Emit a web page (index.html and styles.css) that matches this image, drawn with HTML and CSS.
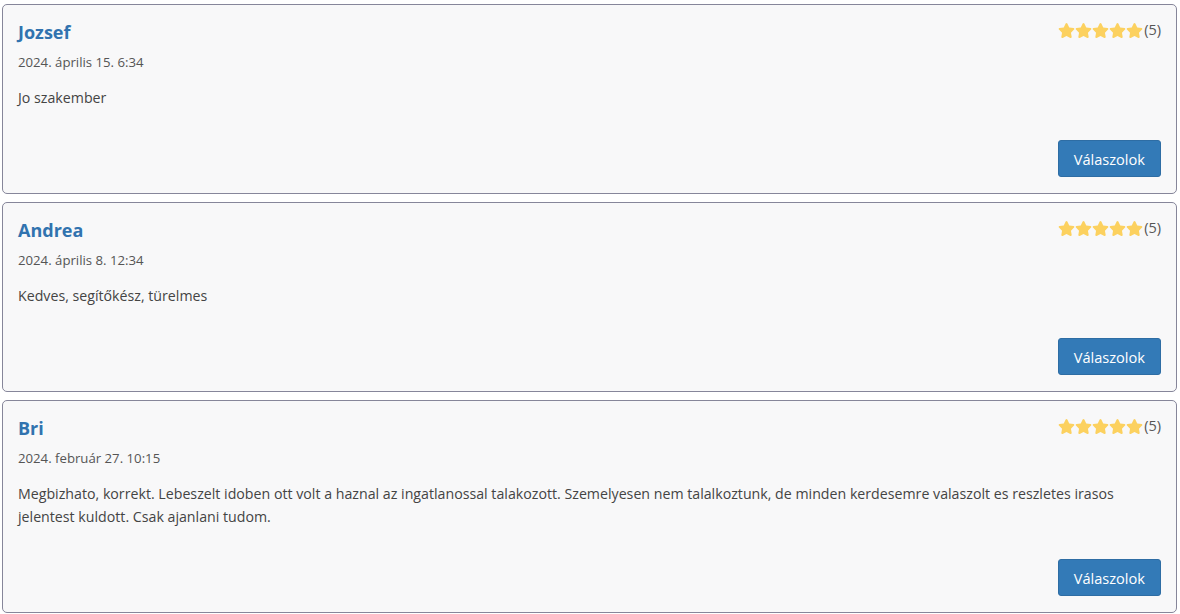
FILE: index.html
```html
<!DOCTYPE html>
<html lang="hu">
<head>
<meta charset="utf-8">
<link rel="stylesheet" href="styles.css">
</head>
<body>
<div class="reviews">
  <div class="review">
    <div class="head">
      <div class="name">Jozsef</div>
      <div class="rating">
        <span class="stars">
          <svg viewBox="0 0 576 512"><path d="M259.3 17.8L194 150.2 47.9 171.5c-26.2 3.8-36.7 36.1-17.7 54.6l105.7 103-25 145.5c-4.5 26.3 23.2 46 46.4 33.7L288 439.6l130.7 68.7c23.2 12.2 50.9-7.4 46.4-33.7l-25-145.5 105.7-103c19-18.5 8.5-50.8-17.7-54.6L382 150.2 316.7 17.8c-11.700-23.6-45.6-23.9-57.4 0z"/></svg><svg viewBox="0 0 576 512"><path d="M259.3 17.8L194 150.2 47.9 171.5c-26.2 3.8-36.7 36.1-17.7 54.6l105.7 103-25 145.5c-4.5 26.3 23.2 46 46.4 33.7L288 439.6l130.7 68.7c23.2 12.2 50.9-7.4 46.4-33.7l-25-145.5 105.7-103c19-18.5 8.5-50.8-17.7-54.6L382 150.2 316.7 17.8c-11.7-23.6-45.6-23.9-57.4 0z"/></svg><svg viewBox="0 0 576 512"><path d="M259.3 17.8L194 150.2 47.9 171.5c-26.2 3.8-36.7 36.1-17.7 54.6l105.7 103-25 145.5c-4.5 26.3 23.2 46 46.4 33.7L288 439.6l130.7 68.7c23.2 12.2 50.9-7.4 46.4-33.7l-25-145.5 105.7-103c19-18.5 8.5-50.8-17.7-54.6L382 150.2 316.7 17.8c-11.7-23.6-45.6-23.9-57.4 0z"/></svg><svg viewBox="0 0 576 512"><path d="M259.3 17.8L194 150.2 47.9 171.5c-26.2 3.8-36.7 36.1-17.7 54.6l105.7 103-25 145.5c-4.5 26.3 23.2 46 46.4 33.7L288 439.6l130.7 68.7c23.2 12.2 50.9-7.4 46.4-33.7l-25-145.5 105.7-103c19-18.5 8.5-50.8-17.7-54.6L382 150.2 316.7 17.8c-11.7-23.6-45.6-23.9-57.4 0z"/></svg><svg viewBox="0 0 576 512"><path d="M259.3 17.8L194 150.2 47.9 171.5c-26.2 3.8-36.7 36.1-17.7 54.6l105.7 103-25 145.5c-4.5 26.3 23.2 46 46.4 33.7L288 439.6l130.7 68.7c23.2 12.2 50.9-7.4 46.4-33.7l-25-145.5 105.7-103c19-18.5 8.5-50.8-17.7-54.6L382 150.2 316.7 17.8c-11.7-23.6-45.6-23.9-57.4 0z"/></svg>
        </span><span class="count">(5)</span>
      </div>
    </div>
    <div class="date">2024. április 15. 6:34</div>
    <p class="text">Jo szakember</p>
    <div class="actions"><button class="btn">Válaszolok</button></div>
  </div>

  <div class="review">
    <div class="head">
      <div class="name">Andrea</div>
      <div class="rating">
        <span class="stars">
          <svg viewBox="0 0 576 512"><path d="M259.3 17.8L194 150.2 47.9 171.5c-26.2 3.8-36.7 36.1-17.7 54.6l105.7 103-25 145.5c-4.5 26.3 23.2 46 46.4 33.7L288 439.6l130.7 68.7c23.2 12.2 50.9-7.4 46.4-33.7l-25-145.5 105.7-103c19-18.5 8.5-50.8-17.7-54.6L382 150.2 316.7 17.8c-11.7-23.6-45.6-23.9-57.4 0z"/></svg><svg viewBox="0 0 576 512"><path d="M259.3 17.8L194 150.2 47.9 171.5c-26.2 3.8-36.7 36.1-17.7 54.6l105.7 103-25 145.5c-4.5 26.3 23.2 46 46.4 33.7L288 439.6l130.7 68.7c23.2 12.2 50.9-7.4 46.4-33.7l-25-145.5 105.7-103c19-18.5 8.5-50.8-17.7-54.6L382 150.2 316.7 17.8c-11.7-23.6-45.6-23.9-57.4 0z"/></svg><svg viewBox="0 0 576 512"><path d="M259.3 17.8L194 150.2 47.9 171.5c-26.2 3.8-36.7 36.1-17.7 54.6l105.7 103-25 145.5c-4.5 26.3 23.2 46 46.4 33.7L288 439.6l130.7 68.7c23.2 12.2 50.9-7.4 46.4-33.7l-25-145.5 105.7-103c19-18.5 8.5-50.8-17.7-54.6L382 150.2 316.7 17.8c-11.7-23.6-45.6-23.9-57.4 0z"/></svg><svg viewBox="0 0 576 512"><path d="M259.3 17.8L194 150.2 47.9 171.5c-26.2 3.8-36.7 36.1-17.7 54.6l105.7 103-25 145.5c-4.5 26.3 23.2 46 46.4 33.7L288 439.6l130.7 68.7c23.2 12.2 50.9-7.4 46.4-33.7l-25-145.5 105.7-103c19-18.5 8.5-50.8-17.7-54.6L382 150.2 316.7 17.8c-11.7-23.6-45.6-23.9-57.4 0z"/></svg><svg viewBox="0 0 576 512"><path d="M259.3 17.8L194 150.2 47.9 171.5c-26.2 3.8-36.7 36.1-17.7 54.6l105.7 103-25 145.5c-4.5 26.3 23.2 46 46.4 33.7L288 439.6l130.7 68.7c23.2 12.2 50.9-7.4 46.4-33.7l-25-145.5 105.7-103c19-18.5 8.5-50.8-17.7-54.6L382 150.2 316.7 17.8c-11.7-23.6-45.6-23.9-57.4 0z"/></svg>
        </span><span class="count">(5)</span>
      </div>
    </div>
    <div class="date">2024. április 8. 12:34</div>
    <p class="text">Kedves, segítőkész, türelmes</p>
    <div class="actions"><button class="btn">Válaszolok</button></div>
  </div>

  <div class="review">
    <div class="head">
      <div class="name">Bri</div>
      <div class="rating">
        <span class="stars">
          <svg viewBox="0 0 576 512"><path d="M259.3 17.8L194 150.2 47.9 171.5c-26.2 3.8-36.7 36.1-17.7 54.6l105.7 103-25 145.5c-4.5 26.3 23.2 46 46.4 33.7L288 439.6l130.7 68.7c23.2 12.2 50.9-7.4 46.4-33.7l-25-145.5 105.7-103c19-18.5 8.5-50.8-17.7-54.6L382 150.2 316.7 17.8c-11.7-23.6-45.6-23.9-57.4 0z"/></svg><svg viewBox="0 0 576 512"><path d="M259.3 17.8L194 150.2 47.9 171.5c-26.2 3.8-36.7 36.1-17.7 54.6l105.7 103-25 145.5c-4.5 26.3 23.2 46 46.4 33.7L288 439.6l130.7 68.7c23.2 12.2 50.9-7.4 46.4-33.7l-25-145.5 105.7-103c19-18.5 8.5-50.8-17.7-54.6L382 150.2 316.7 17.8c-11.7-23.6-45.6-23.9-57.4 0z"/></svg><svg viewBox="0 0 576 512"><path d="M259.3 17.8L194 150.2 47.9 171.5c-26.2 3.8-36.7 36.1-17.7 54.6l105.7 103-25 145.5c-4.5 26.3 23.2 46 46.4 33.7L288 439.6l130.7 68.7c23.2 12.2 50.9-7.4 46.4-33.7l-25-145.5 105.7-103c19-18.5 8.5-50.8-17.7-54.6L382 150.2 316.7 17.8c-11.7-23.6-45.6-23.9-57.4 0z"/></svg><svg viewBox="0 0 576 512"><path d="M259.3 17.8L194 150.2 47.9 171.5c-26.2 3.8-36.7 36.1-17.7 54.6l105.7 103-25 145.5c-4.5 26.3 23.2 46 46.4 33.7L288 439.6l130.7 68.7c23.2 12.2 50.9-7.4 46.4-33.7l-25-145.5 105.7-103c19-18.5 8.5-50.8-17.7-54.6L382 150.2 316.7 17.8c-11.7-23.6-45.6-23.9-57.4 0z"/></svg><svg viewBox="0 0 576 512"><path d="M259.3 17.8L194 150.2 47.9 171.5c-26.2 3.8-36.7 36.1-17.7 54.6l105.7 103-25 145.5c-4.5 26.3 23.2 46 46.4 33.7L288 439.6l130.7 68.7c23.2 12.2 50.9-7.4 46.4-33.7l-25-145.5 105.7-103c19-18.5 8.5-50.8-17.7-54.6L382 150.2 316.7 17.8c-11.7-23.6-45.6-23.9-57.4 0z"/></svg>
        </span><span class="count">(5)</span>
      </div>
    </div>
    <div class="date">2024. február 27. 10:15</div>
    <p class="text">Megbizhato, korrekt. Lebeszelt idoben ott volt a haznal az ingatlanossal talakozott. Szemelyesen nem talalkoztunk, de minden kerdesemre valaszolt es reszletes irasos jelentest kuldott. Csak ajanlani tudom.</p>
    <div class="actions"><button class="btn">Válaszolok</button></div>
  </div>
</div>
</body>
</html>
```

FILE: styles.css
```css
html, body {
  margin: 0;
  padding: 0;
  background: #ffffff;
}
body {
  font-family: "Open Sans", "Noto Sans", sans-serif;
  color: #444;
}
.reviews {
  padding: 4px 3px 2px 2px;
  display: flex;
  flex-direction: column;
  gap: 8px;
}
.review {
  background: #f8f8f9;
  border: 1px solid #86869a;
  border-radius: 5px;
  padding: 15px 15px 16px;
}
.head {
  display: flex;
  justify-content: space-between;
  align-items: flex-start;
}
.name {
  font-size: 18px;
  font-weight: 700;
  color: #3173af;
  line-height: 24px;
}
.rating {
  display: flex;
  align-items: center;
  line-height: 20px;
  font-size: 14.5px;
  color: #555;
}
.stars {
  display: flex;
}
.stars svg {
  width: 17px;
  height: 15px;
  fill: #fcd15f;
}
.count {
  margin-left: 1px;
}
.date {
  margin-top: 9px;
  font-size: 13.2px;
  line-height: 18px;
  color: #555;
}
.text {
  margin: 15px 0 0;
  font-size: 14.2px;
  line-height: 23px;
  color: #444;
}
.actions {
  display: flex;
  justify-content: flex-end;
  margin-top: 31px;
}
.btn {
  font-family: inherit;
  font-size: 14.6px;
  color: #fff;
  background: #337ab7;
  border: 1px solid #2e6da4;
  border-radius: 3px;
  padding: 0 15px;
  height: 37px;
}
```
